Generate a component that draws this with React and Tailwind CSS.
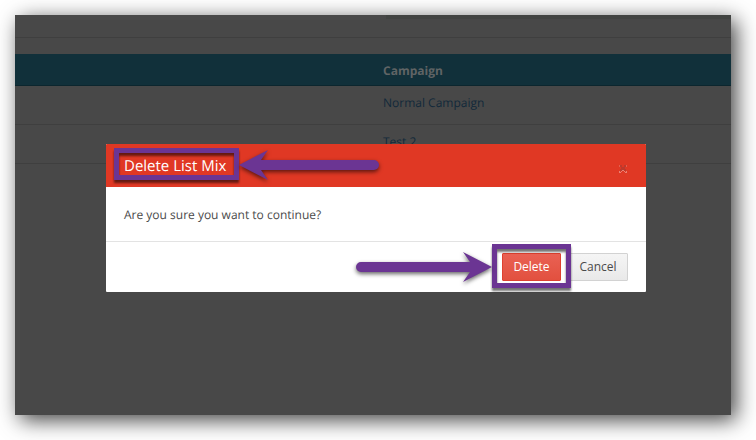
import React from "react";

const campaigns = ["Normal Campaign", "Test 2"];

function Highlight({ className }) {
  return (
    <span
      aria-hidden="true"
      className={`pointer-events-none absolute border-[5px] border-[#6b3593] drop-shadow-[0_3px_1px_rgba(0,0,0,0.55)] ${className}`}
    />
  );
}

function Arrow({ className, length, flip }) {
  const head = length - 29;
  const notch = length - 22;
  return (
    <svg
      aria-hidden="true"
      width={length}
      height="34"
      viewBox={`0 0 ${length} 34`}
      className={`pointer-events-none absolute drop-shadow-[0_2px_2px_rgba(0,0,0,0.6)] ${className}`}
    >
      <g transform={flip ? `translate(${length} 0) scale(-1 1)` : undefined}>
        <path
          d={`M5 12H${notch}L${head} 2L${length} 17L${head} 32L${notch} 22H5A5 5 0 0 1 5 12Z`}
          fill="#6b3593"
        />
      </g>
    </svg>
  );
}

function CampaignTable() {
  return (
    <table className="w-full table-fixed border-separate border-spacing-0 text-left">
      <thead>
        <tr className="h-8 bg-[#11303a] shadow-[inset_0_-1px_0_#0c262e]">
          <th className="w-1/2" />
          <th className="pt-[2px] pl-[10px] font-bold text-[#606465]">Campaign</th>
        </tr>
      </thead>
      <tbody>
        {campaigns.map((name) => (
          <tr key={name} className="h-[39px]">
            <td className="border-b border-[#3f3f3f]" />
            <td className="border-b border-[#3f3f3f] pt-2 pl-[10px] align-top">
              <a href="#campaign" className="text-[#12293a]">{name}</a>
            </td>
          </tr>
        ))}
      </tbody>
    </table>
  );
}

function DeleteDialog() {
  return (
    <div className="absolute inset-x-0 top-[129px] flex justify-center pl-[6px]">
      <section
        role="dialog"
        aria-labelledby="dialog-title"
        className="relative w-[540px] rounded-[1px] bg-white text-[#4a4a4a]"
      >
        <header className="flex h-[43px] items-center justify-between rounded-t-[1px] bg-[#e03824] px-[18px]">
          <h2 id="dialog-title" className="relative text-[15px] leading-6 font-medium text-white">
            Delete List Mix
            <Highlight className="-top-[6px] -bottom-[2px] -left-[10px] w-[125px]" />
          </h2>
          <button type="button" aria-label="Close" className="pt-[6px]">
            <svg viewBox="0 0 10 10" className="h-[10px] w-[10px]" shapeRendering="crispEdges">
              <path d="M2 1H4V3H6V1H8V3H7V5H8V7H6V6H4V7H2V5H3V3H2Z" fill="#bd3a2c" />
              <path d="M1 1H2V3H1ZM8 1H9V3H8Z" fill="#e4604f" />
              <path
                d="M4 6H6V7H4ZM3 7H4V8H3ZM6 7H7V8H6ZM1 7H2V8H1ZM8 7H9V8H8ZM1 8H3V9H1ZM7 8H9V9H7Z"
                fill="#ea8073"
              />
            </svg>
          </button>
        </header>
        <p className="px-[18px] pt-[19px] pb-[17px]">Are you sure you want to continue?</p>
        <footer className="flex justify-end gap-[7px] border-t border-[#e3e3e3] px-[18px] py-[11px]">
          <button
            type="button"
            className="relative h-7 w-[59px] rounded-[1px] border border-[#df4130] bg-linear-to-b from-[#e96153] to-[#e2503f] font-medium text-white"
          >
            Delete
            <Highlight className="-inset-x-[11px] -top-[10px] -bottom-[8px]" />
          </button>
          <button
            type="button"
            className="h-7 w-[60px] rounded-[1px] border border-[#d2d2d2] bg-linear-to-b from-[#f5f5f5] to-[#e9e9e9]"
          >
            Cancel
          </button>
        </footer>
        <Arrow flip length={140} className="top-1 left-[133px]" />
        <Arrow length={136} className="bottom-2 left-[250px]" />
      </section>
    </div>
  );
}

export default function App() {
  return (
    <main className="flex min-h-screen bg-white pt-[15px] pr-[25px] pb-[25px] pl-[15px] font-['Open_Sans',sans-serif] text-xs leading-[18px] antialiased [text-rendering:geometricPrecision]">
      <div className="relative min-h-[400px] flex-1 bg-[#484848] shadow-[5px_5px_20px_rgba(0,0,0,0.75)]">
        <div className="mb-4 h-[23px] border-b border-[#3f3f3f] pl-[371px]">
          <div className="h-1 bg-[#424442]" />
        </div>
        <CampaignTable />
        <DeleteDialog />
      </div>
    </main>
  );
}
